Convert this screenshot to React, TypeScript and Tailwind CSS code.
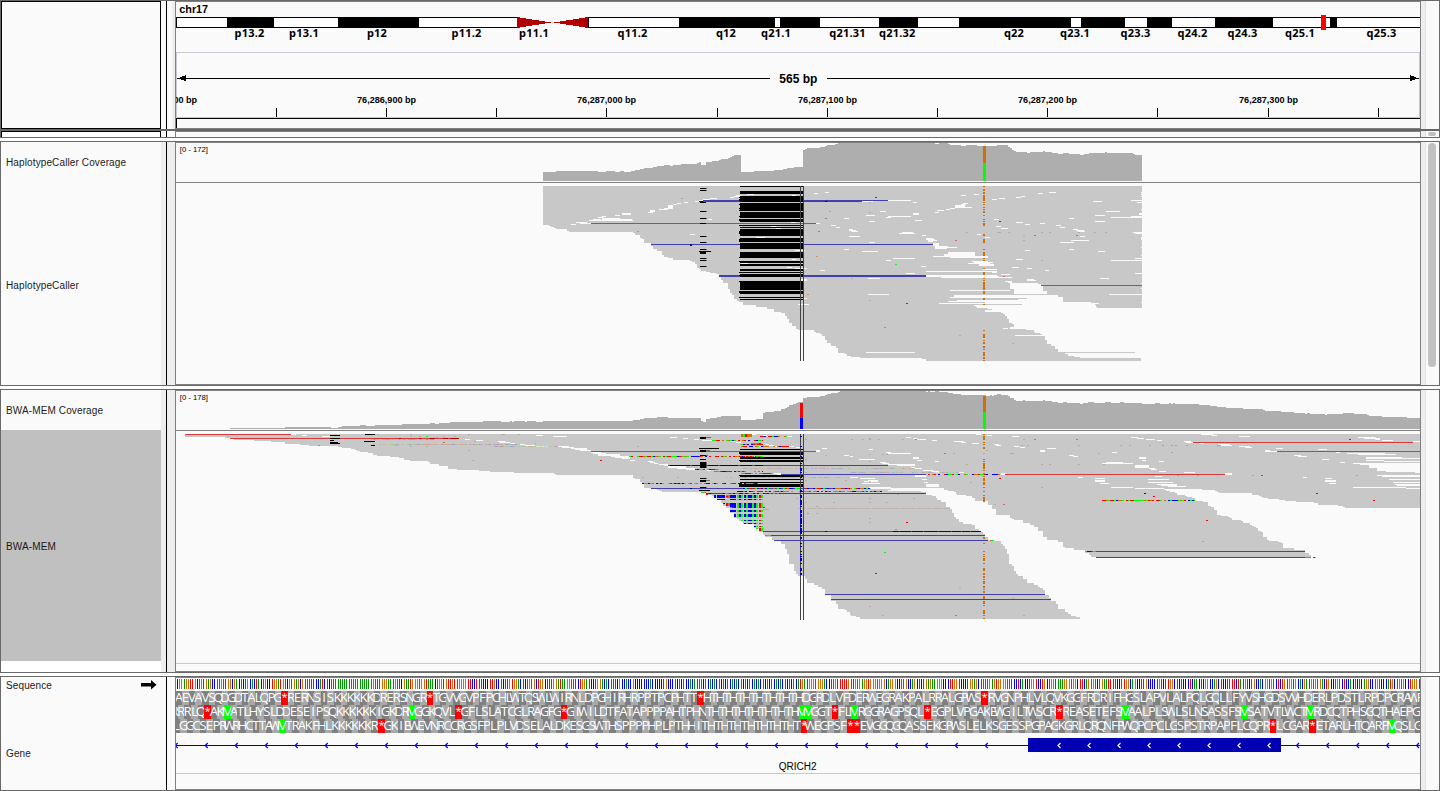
import React from "react";

const PALETTE: Record<string, string> = { A: "#009600", C: "#0000ff", G: "#d17105", T: "#ff0000" };
const READ = "#c8c8c8";
const COVERAGE = "#aeaeae";
const PAPER = "#fafafa";
const FWD = "#4040b0";
const REV = "#d23c3c";
const BASES = ["#00ff00", "#0000ff", "#d17105", "#ff0000"];

/** Standard genetic code, codons in TCAG order. */
const AA = "FFLLSSSSYY**CC*WLLLLPPPPHHQQRRRRIIIMTTTTNNKKSSRRVVVVAAAADDEEGGGG";
const ORDER = "TCAG";

const SEQ =
  "GCGGAGGTTGCAGTGAGCCAAGATGGCGACACTGCACTACAGCCTGGATGACGAGAGCGA" +
  "AATTCCATCTCAAAAAAAAAAAAAAAAAAAGATAGGGAAAGATCGAATGGGAGGTAAACA" +
  "GGTGTTGTAGGGGTTCCTTTCCCTTGCCACTTGTGGACTCAGAGCTGGCTTTGGATAAGG" +
  "AATCTGGATCCTGGACACATTCGCCACCGCCCCCCCACCCCCTGCCCACACACCACATAA" +
  "CACACACACACACACACACACACACACACACACACACACACACATGATGGGAGGGACCTAGTTTTTGATGAGAGGTGGGAGGGCAGGGCCAAGCCAGCTCTGAGAAGGGCCCTTGGTCCCTGGAGCTAAAGAGTGGGGAATCCTCACCTGGTCCTGCAGGTAAAGGGAGG" +
  "CTTCAGAGACAGAATTTTCCATGGCAGCCTTGCCCCTGTCTTGGCTCTCCCTCAACTCGGCCAGCTCCTTTTCTATGTCAGCCACGGTGACTCTGTGGTGCACGATGAGAGACTGCCAGACTCCACACTCAGGCCAGACCCATGCAGAGCCTGGGT";

const aminoAt = (n: number) => {
  if (n < 0) return n === -1 ? "L" : "R";
  return AA[ORDER.indexOf(SEQ[n]) * 16 + ORDER.indexOf(SEQ[n + 1]) * 4 + ORDER.indexOf(SEQ[n + 2])] ?? "P";
};

/** Rectangles written as "x y w [h]" and separated by semicolons; h defaults to one row. */
function Rects({ d, fill, opacity }: { d: string; fill: string; opacity?: number }) {
  const path = d
    .split(";")
    .map((s) => s.trim())
    .filter(Boolean)
    .map((s) => {
      const [x, y, w, h = 3] = s.split(/\s+/).map(Number);
      return `M${x} ${y}h${w}v${h}h${-w}z`;
    })
    .join("");
  return <path d={path} fill={fill} opacity={opacity} />;
}

/** A column of marks; ys holds "y" or "y-end" items. */
function Column({ x, w, ys, fill }: { x: number; w: number; ys: string; fill: string }) {
  const d = ys
    .split(" ")
    .map((s) => {
      const [a, b] = s.split("-").map(Number);
      return `${x} ${a} ${w} ${(b ?? a + 3) - a}`;
    })
    .join(";");
  return <Rects d={d} fill={fill} />;
}

/** Rows of mismatching bases, each "x y w". */
function Mismatches({ d, opacity = 1 }: { d: string; opacity?: number }) {
  const out: React.ReactNode[] = [];
  d.split(";").forEach((row, r) => {
    const [x, y, w] = row.trim().split(/\s+/).map(Number);
    let seed = (x * 31 + y * 17 + 7) % 9973;
    for (let i = 0; i < w; i += 6) {
      seed = (seed * 421 + 1663) % 7875;
      const k = Math.floor((seed / 7875) * 5);
      if (k < 4) out.push(<rect key={`${r}-${i}`} x={x + i} y={y} width={Math.min(6, w - i)} height={3} fill={BASES[k]} />);
    }
  });
  return <g opacity={opacity}>{out}</g>;
}

/** Pileups are plotted on a grid of thirds of a pixel. */
const Tile = ({ x, y, children }: { x: number; y: number; children: React.ReactNode }) => (
  <g transform={`translate(${x} ${y}) scale(${1 / 3})`} shapeRendering="crispEdges">
    {children}
  </g>
);

function Canvas({ top, height, children }: { top: number; height: number; children: React.ReactNode }) {
  return (
    <svg className="block shrink-0 overflow-hidden" width={1244} height={height} viewBox={`176 ${top} 1244 ${height}`} fontFamily="Liberation Sans, Arial, sans-serif">
      {children}
    </svg>
  );
}

const BANDS = [
  [227, 47], [338, 81], [679, 96], [780, 40], [879, 39], [959, 112], [1081, 44], [1147, 25], [1215, 58], [1330, 7],
];
const BAND_LABELS: [string, number][] = [
  ["p13.2", 249.5], ["p13.1", 304], ["p12", 377], ["p11.2", 466.5], ["p11.1", 534], ["q11.2", 632.5], ["q12", 726],
  ["q21.1", 776], ["q21.31", 847.5], ["q21.32", 897.3], ["q22", 1014], ["q23.1", 1075], ["q23.3", 1135.5],
  ["q24.2", 1192.5], ["q24.3", 1242.5], ["q25.1", 1300], ["q25.3", 1381.5],
];
const TICKS = [276, 386, 496, 606, 717, 827, 937, 1047, 1157, 1268, 1378];
const LOCI: [string, number][] = [
  ["76,286,800 bp", 167.6], ["76,286,900 bp", 386.6], ["76,287,000 bp", 606.6], ["76,287,100 bp", 827.6],
  ["76,287,200 bp", 1047.6], ["76,287,300 bp", 1268.6],
];

function Ideogram() {
  return (
    <Canvas top={2} height={126}>
      <text x={179.3} y={13} fontSize={10.8} fontWeight={700}>chr17</text>
      <g shapeRendering="crispEdges">
        <rect x={176} y={17} width={1244} height={11} fill="#000" />
        <rect x={177} y={18} width={340} height={9} fill="#fff" />
        <rect x={517} y={17} width={72} height={11} fill={PAPER} />
        <rect x={588} y={17} width={1} height={11} fill="#000" />
        <rect x={589} y={18} width={831} height={9} fill="#fff" />
        {BANDS.map(([x, w]) => <rect key={x} x={x} y={17} width={w} height={11} fill="#000" />)}
        <path d="M517 17L551 22.5L517 28ZM588 17L554 22.5L588 28Z" fill="#b00000" />
        <rect x={1321} y={15} width={5} height={15} fill="#ff0000" />
        <path d="M176.5 118V52.5H1419.5V117.5H176.5" fill="none" stroke="#c8c8d6" />
        <rect x={176} y={118} width={1244} height={1} fill="#000" />
        <rect x={176} y={118} width={1} height={10} fill="#000" />
        <rect x={177} y={78} width={593} height={1} />
        <rect x={827} y={78} width={592} height={1} />
        <path d="M177 78.5L186 75V81ZM1419 78.5L1410 75V81Z" />
        {TICKS.map((x) => <rect key={x} x={x} y={108} width={1} height={9} />)}
      </g>
      <g fontFamily="'Noto Sans', 'DejaVu Sans', sans-serif" fontSize={11} letterSpacing={0.2} fontWeight={700} textAnchor="middle">
        {BAND_LABELS.map(([t, x]) => <text key={t} x={x} y={37.3}>{t}</text>)}
      </g>
      <text x={798.3} y={83} fontSize={12} fontWeight={700} textAnchor="middle">565 bp</text>
      <g fontSize={9.1} fontWeight={700} textAnchor="middle">
        {LOCI.map(([t, x]) => <text key={t} x={x} y={103}>{t}</text>)}
      </g>
    </Canvas>
  );
}

function HaplotypeCaller() {
  return (
    <Canvas top={143} height={241}>
      <text x={179.8} y={152.3} fontSize={7.7}>[0 - 172]</text>
      <Tile x={530} y={140}>
        <path fill={COVERAGE} d="M39 123V96H78V93H204V96H228V93H255V96H270V93H282V96H303V93H315V90H330V87H342V84H369V81H381V78H402V75H420V78H429V75H453V72H501V69H507V66H513V75H528V66H546V63H567V60H573V57H594V54H600V51H606V48H612V45H633V96H672V93H732V90H759V87H771V84H792V81H819V30H825V27H831V24H870V21H885V18H891V15H915V12H924V9H1215V12H1227V9H1254V12H1260V15H1293V18H1308V15H1340V18H1374V18H1401V15H1434V21H1440V24H1446V30H1452V33H1458V36H1491V39H1500V36H1539V33H1545V36H1566V39H1584V42H1599V39H1617V42H1650V45H1662V42H1677V39H1725V36H1731V39H1809V42H1815V45H1836V123Z" />
        <Rects d="1359 18 9 51" fill="#d17105" />
        <Rects d="1359 69 9 54" fill="#00ff00" />
        <path fill={READ} d="M39 138V255H57V258H63V261H72V264H78V267H111V273H117V276H309V279H315V285H330V294H336V297H342V309H363V318H369V327H381V333H396V345H402V351H414V354H429V360H480V363H486V366H495V372H501V384H507V387H513V393H528V396H540V399H558V402H567V411H573V420H579V429H594V447H600V459H606V465H612V477H621V483H627V486H639V495H678V501H711V507H732V516H753V519H765V528H771V537H777V549H786V558H798V567H804V570H852V576H858V579H870V582H876V588H885V600H891V609H903V618H918V624H924V639H945V642H951V648H963V651H990V654H1176V657H1188V663H1833V654H1650V651H1632V648H1614V642H1605V639H1815V636H1584V627H1575V618H1563V612H1551V600H1545V588H1536V582H1530V579H1515V576H1512V570H1488V567H1440V561H1452V552H1446V549H1437V537H1431V528H1425V522H1419V519H1413V516H1365V510H1386V507H1371V501H1338V498H1332V495H1476V492H1227V489H1464V480H1590V474H1599V486H1683V492H1689V498H1698V504H1836V138Z" />
        <Rects fill={PAPER} d="123 252 15;138 246 33;150 249 33;177 240 132;189 237 24;204 231 15;216 234 54;216 237 90;216 228 12;255 225 15;276 219 27 3;276 222 27;354 216 15;360 210 15 6;387 207 27;402 204 27;414 195 15 9;429 192 12;441 189 12;462 186 12;495 183 24;507 180 15;519 177 21;540 174 21;600 171 12;612 168 18;618 165 15;651 162 21;534 237 12;480 282 15;678 291 27;852 159 12;885 156 12;903 255 15;918 261 12;858 249 12;633 369 21;723 258 15;738 264 15;795 330 30;786 357 12;771 381 15;795 384 36;870 390 15;813 417 18 6;819 474 12;804 492 33;783 246 15" />
        <Rects fill={FWD} d="519 180 411 6;363 312 567 3;567 405 363 6" />
        <Rects fill={REV} d="183 249 675" />
        <Rects fill="#0000b0" d="480 312 6 6;885 183 6;507 183 12" />
        <Rects fill="#000" opacity={0.45} d="525 144 6;525 150 6;525 213 6;525 234 6;525 288 6;525 306 6;525 327 6;525 354 6;525 360 6;525 378 6" />
        <Column x={510} w={18} fill="#000" ys="144 150 186 213 234 249 288 306 327 336-342 354 360 378" />
        <Rects fill="#000" d="507 333 36" />
        <Column x={630} w={189} fill="#000" ys="138 153-162 168-186 189-213 216-234 237-246 255 261 267-288 294-306 309-327 336-354 363-369 372-378 387-393 396 402-411 423-450 453-462 471 477" />
        <Column x={627} w={3} fill="#000" ys="171 177-183 192-195 204 210 228 237-243 255 273-282 297-306 351 363 396 405 423 453-459 471" />
        <Rects fill={PAPER} d="633 369 21;786 165 12;783 246 15" />
        <Rects fill={FWD} opacity={0.5} d="864 273 6;885 234 6" />
        <Rects fill="#009600" opacity={0.4} d="897 213 6;453 174 6;321 273 6" />
        <Rects fill="#d17105" opacity={0.6} d="831 462 6;858 348 6" />
        <Column x={810} w={3} fill="#444" ys="138-663" />
        <Column x={819} w={3} fill="#444" ys="138-663" />
      </Tile>
      <Tile x={830} y={140}>
        <Rects fill={PAPER} d="174 180 69;96 183 33;249 186 12;150 213 18;108 225 27;249 219 18 6;174 228 69;168 231 15;42 234 15;255 240 21;117 243 18;3 255 15;18 261 12;57 267 12;57 270 21;63 273 21;57 288 33;216 276 33;207 279 48;276 285 12;288 294 21;288 297 27;294 300 27;117 306 18;294 303 15;309 309 18 9;315 318 39;315 321 66;315 324 36;42 327 15;96 333 48;189 354 66;168 360 15;273 378 15;228 399 27;114 414 36;114 462 63;108 636 147;321 210 21;315 216 12;348 207 12;360 204 15;375 195 30 6;375 201 51;399 189 15;393 192 15;393 165 15;432 162 15;486 177 15;507 174 18;558 171 15;573 168 12;624 159 15;657 156 21;789 183 27;903 180 33;921 186 15;828 213 42;795 225 30;903 228 33;843 231 93;927 219 9 6;717 234 15;795 243 30;492 237 15;498 258 15;513 264 21;558 246 21;585 252 15;630 249 15;678 255 15;690 261 15;729 267 15;738 270 24;744 273 21;750 288 15;723 300 54;690 306 42;717 327 15;804 333 21;585 330 15;558 357 21;843 360 93;915 354 21;909 276 27;915 279 21;441 282 12;465 291 15;354 336 81 9;342 342 93 3;342 345 93;309 348 165;360 351 114;426 363 48;414 369 66;432 366 57;447 372 45 6;546 381 21;591 384 15;645 390 12;459 387 42;288 393 213;486 396 15;513 402 27;288 405 213;288 408 219;333 411 213;915 399 21;810 414 27;591 417 21 3;591 420 27;525 423 21;534 426 12;540 429 84 18;600 432 33 6;600 438 39 15;552 447 87 15;600 453 51 9;837 462 99;360 450 180;372 465 312;360 471 339;372 468 312;591 474 108 6;564 477 135 3;381 480 318 6;354 483 345;327 489 480;465 486 318;576 492 220 6;432 495 366;438 498 360;441 501 360;555 585 90;519 564 15" />
        <Rects fill={READ} d="360 474 231;393 477 171;381 486 84" />
        <Rects fill={FWD} d="0 180 174;0 183 96;0 312 309;0 405 288 6" />
        <Rects fill={REV} d="633 435 303" />
        <Rects fill="#ff0000" d="135 171 6;507 243 6;228 489 6" />
        <Rects fill="#ff0000" opacity={0.5} d="375 300 6;612 285 6;738 285 6;519 408 6" />
        <Rects fill="#00ff00" d="195 372 6;162 561 6" />
        <Rects fill="#a08060" opacity={0.4} d="117 186 6;117 216 6;63 414 6;117 480 6;408 276 6;501 276 12;534 276 6;633 276 6;657 276 6;744 276 6;792 276 6;825 276 6;579 285 6;579 300 6;633 360 6;387 585 6;546 609 6" />
        <Rects fill={PAPER} d="933 156 3;933 162 3;933 168 3;933 207 3;933 290 3 9;933 320 3;933 345 3;933 430 3;933 444 3;933 486 3" />
        <Column x={459} w={6} fill="#d17105" ys="138 147-153 156-162 165-183 186 192 201 207 213-219 225 237 243 249-258 282-288 297-309 327 336-348 354 360 384 396-405 414 420 426-450 453-462 474-480 492 570 582-594 600 606-612 618-624 627 636-648 651-657 660" />
      </Tile>
      <rect x={176} y={182} width={1244} height={1} fill="#808080" shapeRendering="crispEdges" />
    </Canvas>
  );
}

function BwaMem() {
  return (
    <Canvas top={391} height={280}>
      <text x={179.8} y={400.3} fontSize={7.7}>[0 - 178]</text>
      <Tile x={170} y={385}>
        <path fill={COVERAGE} d="M180 132V129H345V126H483V129H504V126H516V123H570V120H588V123H615V120H696V117H780V114H795V117H807V114H840V111H939V108H993V111H1020V108H1026V111H1032V108H1065V111H1071V108H1098V111H1119V108H1170V132Z" />
        <path fill={READ} d="M45 147V156H165V159H180V162H192V165H252V168H303V171H345V177H390V180H417V183H504V186H516V189H543V192H555V195H561V198H570V201H594V204H609V210H621V213H660V216H687V219H702V225H720V228H774V231H780V237H807V243H834V252H861V255H927V258H960V261H1032V264H1152V267H1158V270H1170V147Z" />
        <Rects fill={PAPER} d="363 147 15;396 150 15;456 153 24;1098 150 21;1149 153 42;885 162 15;918 165 21;984 168 21;990 171 30;1020 174 15;1050 177 15;1065 180 30;1098 183 36;1164 183 6" />
        <Rects fill={REV} d="45 147 318;180 159 687" />
        <Rects fill="#b00000" d="687 159 6;747 159 6;780 159 15;819 159 15;840 159 27" />
        <Column x={480} w={30} fill="#000" ys="150 159 174" />
        <Column x={480} w={24} fill="#000" ys="171-177" />
        <Rects fill="#000" d="480 165 12;585 147 30;582 168 33;603 180 12" />
        <Mismatches opacity={0.2} d="609 177 441;972 183 192;612 162 180" />
        <Rects fill="#a08060" opacity={0.4} d="621 147 6;720 147 6;894 147 6;993 147 12;1044 147 6;720 153 6;747 153 6;768 162 6;798 156 6;819 153 6;852 153 6;912 168 6;675 180 6;720 183 6;768 183 6;894 195 6;906 225 6;171 153 6;1092 174 6" />
        <Rects fill="#00ff00" d="444 180 6;609 162 6;768 153 6" />
        <Rects fill="#d17105" d="819 171 6" />
      </Tile>
      <Tile x={560} y={385}>
        <path fill={COVERAGE} d="M0 132V108H219V105H240V102H252V99H291V96H324V99H423V108H429V111H438V102H450V99H471V96H483V93H543V105H588V102H609V84H615V81H642V78H663V72H675V69H681V66H687V60H699V57H708V54H714V51H729V39H741V36H780V33H795V30H801V27H813V24H834V21H840V18H870V132Z" />
        <Rects d="720 54 9 45" fill="#ff0000" />
        <Rects d="720 99 9 33" fill="#0000ff" />
        <path fill={READ} d="M0 147V270H219V279H225V282H240V291H246V297H252V309H273V312H291V315H297V318H306V321H423V324H438V330H456V333H462V339H471V345H483V354H489V363H498V369H510V384H522V399H531V402H537V408H549V417H582V429H588V432H597V441H609V450H615V456H636V465H642V468H663V477H675V492H681V507H687V537H702V558H708V567H714V573H735V582H741V594H762V600H774V606H786V612H795V630H813V648H828V657H834V672H855V675H861V681H870V147Z" />
        <Rects fill={PAPER} d="0 153 21;330 156 21;369 159 15;402 162 15;426 165 30;510 168 18;528 171 15;576 147 12;609 150 12;681 153 15;615 177 12;627 180 15;642 183 15;687 183 15;708 186 12;0 183 27;6 186 36;33 189 48;45 192 36;60 195 33;768 195 12 6;786 189 15;93 201 30;99 204 39;114 207 66;114 210 66;153 213 54;165 216 45;186 219 24;210 225 15;264 228 15;270 231 15;282 234 12;297 237 27;312 240 12;324 243 54 6;351 249 54;378 252 27;441 255 12;642 264 21;650 267 12;852 210 15" />
        <Rects fill={REV} d="93 198 675" />
        <Rects fill={FWD} d="324 240 546;663 267 207;273 309 597;441 324 429;609 438 261;615 450 255;642 465 228;795 627 75;813 642 57" />
        <Rects fill="#000090" d="330 240 60;396 240 42;444 240 30;480 240 54;540 240 36;585 240 24;390 309 6;795 438 6" />
        <Mismatches d="456 165 153;543 177 66;543 183 144;207 213 402;405 252 72;462 258 147;543 264 99;246 294 348;543 309 327;531 318 339;441 324 219;615 450 27;600 153 81;423 321 15;438 327 12;573 174 33" />
        <Mismatches opacity={0.15} d="543 249 327;498 276 372" />
        <Rects fill="#a08060" opacity={0.25} d="714 369 24;741 369 27;771 369 18;792 369 42;837 369 33" />
        <Rects fill="#d17105" d="543 147 6 9;561 147 15 9" />
        <Rects fill="#00ff00" d="549 147 6 9" />
        <Rects fill="#ff0000" d="555 147 6 9;120 225 6" />
        {[
          [471, 330, 9], [471, 342, 3], [510, 354, 12], [510, 366, 3], [510, 375, 6], [525, 387, 9], [543, 405, 3], [549, 414, 3], [582, 423, 3], [588, 429, 3], [597, 432, 6],
        ].map(([start, y, h]) => (
          <React.Fragment key={y}>
            {[
              [471, 24, 1], [510, 18, 1], [531, 6, 0], [537, 6, 1], [543, 6, 0], [552, 6, 1], [558, 6, 0], [564, 12, 1], [576, 6, 0], [582, 6, 1], [588, 6, 0], [597, 6, 3], [603, 6, 0],
            ].filter(([x]) => x >= start).map(([x, w, c]) => (
              <rect key={x} x={x} y={y} width={w} height={h} fill={BASES[c]} />
            ))}
          </React.Fragment>
        ))}
        <Rects fill="#d17105" d="498 330 12 9;504 354 6 9;510 366 6" />
        <Rects fill="#ff0000" d="498 333 6;498 354 6 9;516 366 6;438 324 6 6;609 366 6" />
        <Rects fill="#0000ff" d="462 330 6 9;489 354 6;522 387 6 9" />
        <Rects fill="#000" opacity={0.45} d="438 156 15;438 195 12;438 210 6;438 231 3 18;438 279 3;438 285 12;438 306 3" />
        <Column x={420} w={18} fill="#000" ys="156-162 195-201 210 222 231-249 279 285-291 306" />
        <Rects fill="#000" d="417 189 60;417 315 33" />
        <Column x={540} w={189} fill="#000" ys="192 201-210 216-222 225-231 270-276 282 291 297-306" />
        <Column x={537} w={3} fill="#000" ys="201-207 225 270 297-306" />
        <Mismatches d="540 213 66;560 294 30" />
        <Rects fill="#a08060" opacity={0.4} d="735 162 6;873 162 6;735 222 6;735 261 6;735 285 6;855 285 6;708 339 6;735 351 6;768 363 6;768 384 6;819 351 6;795 210 6;231 183 6;246 276 6;351 276 6;609 372 18" />
        <Rects fill="#d17105" opacity={0.6} d="741 384 6" />
        <Column x={720} w={3} fill="#444" ys="147-705" />
        <Column x={729} w={3} fill="#444" ys="147-705" />
        <Column x={720} w={6} fill="#0000c0" ys="153 183 213 234 240 249-258 261 276 315-321 330-339 345-360 363 375-384 387-396 399-417 420-426 429-447 456-462 474 483 498 507 513 519-528 534 549-558 564-570" />
      </Tile>
      <Tile x={850} y={385}>
        <path fill={COVERAGE} d="M0 132V18H228V21H234V18H240V21H255V18H267V21H294V24H309V27H333V30H408V33H420V30H426V33H432V30H441V27H453V30H474V33H480V39H492V45H498V48H519V45H525V48H579V45H585V48H606V51H624V54H639V51H651V54H690V57H699V54H714V51H732V54H765V51H783V54H810V51H822V54H870V132Z" />
        <Rects d="399 33 9 48" fill="#d17105" />
        <Rects d="399 81 9 51" fill="#00ff00" />
        <path fill={READ} d="M0 147V690H3V693H18V696H30V702H690V696H678V693H663V687H654V681H645V672H624V657H618V648H603V639H597V630H585V615H579V609H570V606H564V600H552V594H531V582H519V573H504V567H498V558H492V543H486V537H477V507H471V492H465V483H459V477H453V468H432V465H414V456H405V447H399V441H393V438H387V432H376V420H366V417H339V411H327V402H318V396H312V384H306V372H300V366H288V351H273V345H261V339H258V333H246V330H228V321H213V318H123V309H282V315H294V318H312V321H318V327H321V330H348V333H366V339H375V348H414V360H426V372H438V390H480V399H486V402H492V405H519V414H540V420H552V426H564V438H579V456H591V465H624V471H639V486H645V489H672V495H705V504H717V510H723V516H738V519H870V147Z" />
        <Rects fill={PAPER} d="378 147 15;411 150 15;168 156 15;486 153 21;189 159 12;200 162 28;246 165 15;312 168 30;333 171 15;366 174 21;432 177 15;438 180 15;492 183 15;510 186 15;591 189 27;57 192 12;570 195 15 6;108 201 15;114 204 69;785 201 15;657 210 15;669 213 15;0 213 9;189 216 18 6;201 225 15;27 222 48;255 228 12;90 231 18;96 234 21;114 237 81;141 240 54;183 246 12;195 249 20;219 255 30;246 258 21;252 261 15;327 261 15;453 264 12 6;195 270 33 6;0 276 24;30 279 45;54 285 30;42 288 42;36 294 54;216 282 15;222 291 12;228 297 39 9;57 306 66;63 309 60;114 315 100;843 156 21;861 159 9;768 231 52;757 234 93;867 216 3 6;855 240 15 9;685 276 15;735 279 30;735 285 30 6;750 294 27;783 306 66;855 309 15" />
        <Rects fill={FWD} d="0 240 114;0 267 228;96 324 132;0 324 100;0 438 393;0 450 405;0 465 414;0 627 585;0 642 603;738 498 132;738 516 132" />
        <Rects fill={REV} d="465 267 405" />
        <Rects fill="#000090" d="129 438 18;150 438 33;186 438 33;222 438 42;267 438 36;306 438 27;336 438 24;363 438 30" />
        <Mismatches d="228 267 225;0 309 63;0 318 96;414 465 18;705 498 33;756 345 114" />
        <Mismatches opacity={0.15} d="0 249 195;0 261 327" />
        <Rects fill="#a08060" opacity={0.25} d="0 369 33;36 369 27;66 369 39;108 369 39;150 369 18;171 369 24;198 369 27;228 369 15;246 369 30;279 369 21" />
        <Rects fill="#ff0000" d="447 279 6;168 411 6;75 564 6" />
        <Rects fill="#ff0000" opacity={0.5} d="552 162 6;678 162 6;282 204 6;459 357 6;315 690 6;195 162 6" />
        <Rects fill="#00ff00" d="135 432 6;102 501 6" />
        <Rects fill="#0000ff" d="882 324 6" />
        <Rects fill="#a08060" opacity={0.4} d="3 162 6;36 162 6;57 159 6 6;84 162 6;156 162 6;519 162 6;684 180 6;810 180 6;837 180 6;513 180 6;531 180 6;408 195 6;57 207 6;96 207 6;108 207 6;309 204 6;399 204 6;480 204 12;744 204 6;57 228 6;348 237 6;573 237 6;597 237 6;684 237 6;760 237 6;57 288 6;360 291 6;573 306 6;57 339 6;141 327 6;189 339 6;57 351 6;108 351 6;432 357 6;57 399 6;57 411 6;327 609 6;486 639 6;57 663 6;96 690 6;519 690 6" />
        <Column x={399} w={6} fill="#d17105" ys="147 153-165 171 177 186-192 222 228 234-252 255 264 273 279-288 291-300 306 318 330 336-351 456-462 474 498 507 513 519-528 534 549-558 564-570 573-579 582 588-597 603-609 612 618-624 633-642 648-657 660 675-687 690 699" />
      </Tile>
      <Tile x={1140} y={385}>
        <path fill={COVERAGE} d="M0 132V54H6V57H45V54H60V57H87V54H93V57H99V54H105V57H177V60H210V63H231V66H258V69H309V72H369V75H375V78H423V81H462V84H495V87H501V84H510V87H555V90H561V87H609V84H642V87H681V90H687V93H726V96H801V99H840V132Z" />
        <path fill={READ} d="M0 147V519H513V510H507V504H495V495H462V489H429V474H423V471H414V468H387V465H381V456H369V441H363V438H354V429H348V426H342V423H336V420H330V414H309V408H303V405H276V399H270V396H264V393H243V390H231V375H222V366H213V363H204V351H189V348H165V339H156V336H141V333H135V330H111V324H105V321H90V318H78V315H72V312H186V315H225V318H231V321H237V324H336V330H357V333H363V336H369V339H384V342H417V345H435V348H468V351H522V354H534V360H594V363H609V366H615V369H840V147Z" />
        <Rects fill={PAPER} d="183 147 36;216 150 15;297 153 33;0 159 12;18 162 27;51 165 15;132 168 21;138 171 21;819 168 21;177 174 15;234 177 36;243 180 33;297 183 33;315 186 21;408 189 21;534 192 27;375 195 15;375 198 36;588 201 12;621 204 114;654 207 114;462 210 21;474 213 27;0 216 18 6;678 216 108;678 219 162;546 222 21;6 225 12;678 225 54;732 228 108;600 231 15;57 228 15;639 234 201;660 237 180;687 240 153 9;0 240 27 9;27 249 18;33 252 18;711 249 129 9;738 258 102;57 258 21;132 261 33;825 261 15;711 270 129;726 273 114;45 273 21;489 276 12;555 279 21;24 282 63;747 282 93;555 285 33 6;24 291 75;567 294 21;759 291 81;765 297 75;771 300 69;51 297 60;63 300 48;84 303 54;639 306 159;798 309 42;0 309 72;654 156 54;672 159 48;705 162 15;726 165 33;255 264 21 6" />
        <Rects fill={FWD} d="0 498 495;0 516 495" />
        <Rects fill={REV} d="159 171 660;411 198 429;0 267 255" />
        <Mismatches d="0 345 165;495 516 33" />
        <Rects fill="#ff0000" d="627 162 6;39 333 6;528 324 6;699 345 6;198 405 6" />
        <Rects fill="#0000ff" d="12 324 6" />
        <Rects fill={FWD} opacity={0.7} d="363 270 6" />
        <Rects fill={FWD} opacity={0.3} d="93 180 6;93 201 6;111 270 6;171 270 6;336 270 6;648 270 6;186 468 6" />
        <Rects fill="#009600" opacity={0.3} d="27 180 6;66 180 6;105 180 6;138 180 6;231 180 12" />
      </Tile>
      <g shapeRendering="crispEdges">
        <rect x={176} y={430} width={1244} height={1} fill="#808080" />
        <rect x={176} y={663} width={1244} height={1} fill="#c8c8c8" />
      </g>
    </Canvas>
  );
}

const STEP = 1244 / 565;
const LEFT = 175.5;

function AminoRow({ shift, y }: { shift: number; y: number }) {
  return (
    <g>
      {Array.from({ length: 189 }, (_, k) => {
        const n = 3 * k - shift;
        const a = aminoAt(n);
        const x0 = Math.round(LEFT + n * STEP);
        const x1 = Math.round(LEFT + (n + 3) * STEP);
        const fill = a === "*" ? "#ff0000" : a === "M" ? "#00ff00" : k % 2 ? "#a9a9a9" : "#808080";
        return (
          <g key={k}>
            <rect x={x0} y={y} width={x1 - x0} height={14} fill={fill} shapeRendering="crispEdges" />
            <text x={(x0 + x1) / 2} y={a === "*" ? y + 10.4 : y + 11.3} fontSize={a === "*" ? 11 : 13.3} textAnchor="middle">{a}</text>
          </g>
        );
      })}
    </g>
  );
}

const chevron = (x: number) => `M${x + 2} 743l-2.5 2.5l2.5 2.5`;

function Annotation() {
  return (
    <Canvas top={678} height={111}>
      <g shapeRendering="crispEdges">
        {SEQ.split("").map((b, n) => (
          <rect key={n} x={Math.floor(175.2 + n * STEP)} y={679} width={1} height={10} fill={PALETTE[b]} />
        ))}
      </g>
      <g fontFamily="'Open Sans', 'Noto Sans', sans-serif" fill="#fff">
        <AminoRow shift={0} y={691} />
        <AminoRow shift={2} y={705} />
        <AminoRow shift={1} y={719} />
      </g>
      <g shapeRendering="crispEdges">
        <rect x={176} y={745} width={1244} height={1} fill="#0000b2" />
        <rect x={1028} y={738} width={253} height={14} fill="#0000b2" />
        <rect x={176} y={773} width={1244} height={1} fill="#c8c8c8" />
      </g>
      <path fill="none" stroke="#0000ff" strokeWidth={1.2} d={[...Array.from({ length: 28 }, (_, i) => 175.7 + 30 * i), 1297, 1327, 1357, 1387, 1417].map(chevron).join("")} />
      <path fill="none" stroke="#fff" strokeWidth={1.2} d={Array.from({ length: 8 }, (_, i) => 1058.5 + 30 * i).map(chevron).join("")} />
      <text x={797.7} y={770} fontSize={10} textAnchor="middle">QRICH2</text>
    </Canvas>
  );
}

function Track({ className, names, gap, rail, thumb, children }: { className: string; names: React.ReactNode; gap: string; rail: string; thumb?: React.ReactNode; children: React.ReactNode }) {
  return (
    <section className={`flex shrink-0 border border-[#696969] bg-[#fafafa] ${className}`}>
      <div className="flex w-40 shrink-0 flex-col">{names}</div>
      <div className={`w-[5px] shrink-0 ${gap}`} />
      <div className="w-px shrink-0 bg-black" />
      <div className={`w-2 shrink-0 ${rail}`} />
      <div className="w-[1246px] shrink-0 border border-[#808080]">{children}</div>
      <div className="w-1 shrink-0 bg-[#eeeeee]" />
      <div className="w-px shrink-0 bg-[#e2e2e2]" />
      <div className="flex grow pl-0.5">{thumb}</div>
    </section>
  );
}

const Name = ({ className, children }: { className: string; children: React.ReactNode }) => (
  <div className={`flex shrink-0 items-center pl-[5px] text-[10px] leading-none tracking-[0.12px] text-[#1a1a1a] ${className}`}>{children}</div>
);

export default function App() {
  return (
    <main className="flex h-[791px] w-[1440px] flex-col overflow-hidden bg-white font-['Liberation_Sans',Arial,sans-serif]">
      <header className="flex h-[138px] shrink-0 flex-col border border-[#696969] bg-[#fafafa]">
        <div className="flex h-32 shrink-0">
          <div className="w-40 shrink-0 border border-black" />
          <div className="w-[5px] shrink-0" />
          <div className="w-px shrink-0 bg-black" />
          <div className="w-[5px] shrink-0" />
          <div className="w-[3px] shrink-0 bg-[#eeeeee]" />
          <div className="w-[1246px] shrink-0 border border-[#808080]">
            <Ideogram />
          </div>
          <div className="w-1 shrink-0 bg-[#eeeeee]" />
          <div className="w-px shrink-0 bg-[#e2e2e2]" />
        </div>
        <div className="h-0.5 shrink-0 bg-[#666666]" />
        <div className="flex grow">
          <div className="w-40 shrink-0 border border-b-0 border-black bg-white" />
          <div className="w-[5px] shrink-0" />
          <div className="w-px shrink-0 bg-black" />
          <div className="w-2 shrink-0" />
          <div className="w-[1246px] shrink-0 border border-b-0 border-[#808080]" />
          <div className="w-1 shrink-0 bg-[#eeeeee]" />
          <div className="w-px shrink-0 bg-[#e2e2e2]" />
          <div className="flex grow items-center pl-0.5">
            <div className="h-1 w-2 rounded-full bg-[#c1c1c1]" />
          </div>
        </div>
      </header>

      <Track
        className="mt-[3px] h-[245px]"
        gap="bg-[#eeeeee]"
        rail="bg-[#eeeeee]"
        thumb={<div className="mt-px h-[224px] w-2 rounded-full bg-[#c1c1c1]" />}
        names={
          <>
            <Name className="h-[42px]">HaplotypeCaller Coverage</Name>
            <Name className="h-[203px]">HaplotypeCaller</Name>
          </>
        }
      >
        <HaplotypeCaller />
      </Track>

      <Track
        className="mt-[3px] h-[284px]"
        gap="bg-[#eeeeee]"
        rail="bg-[#eeeeee]"
        names={
          <>
            <Name className="h-10 pt-0.5">BWA-MEM Coverage</Name>
            <Name className="h-[231px] bg-[#c0c0c0] pt-0.5">BWA-MEM</Name>
            <div className="grow bg-white" />
          </>
        }
      >
        <BwaMem />
      </Track>

      <Track
        className="mt-[3px] h-[115px]"
        gap=""
        rail=""
        names={
          <>
            <div className="flex h-[17px] items-center justify-between pr-1">
              <Name className="">Sequence</Name>
              <svg className="-mt-0.5 block" width="16" height="10" viewBox="0 0 16 10">
                <path d="M0 3H10V0L15.5 4.8L10 9.6V6.6H0Z" fill="#000" />
              </svg>
            </div>
            <Name className="mt-[54px] h-3">Gene</Name>
          </>
        }
      >
        <Annotation />
      </Track>
    </main>
  );
}
